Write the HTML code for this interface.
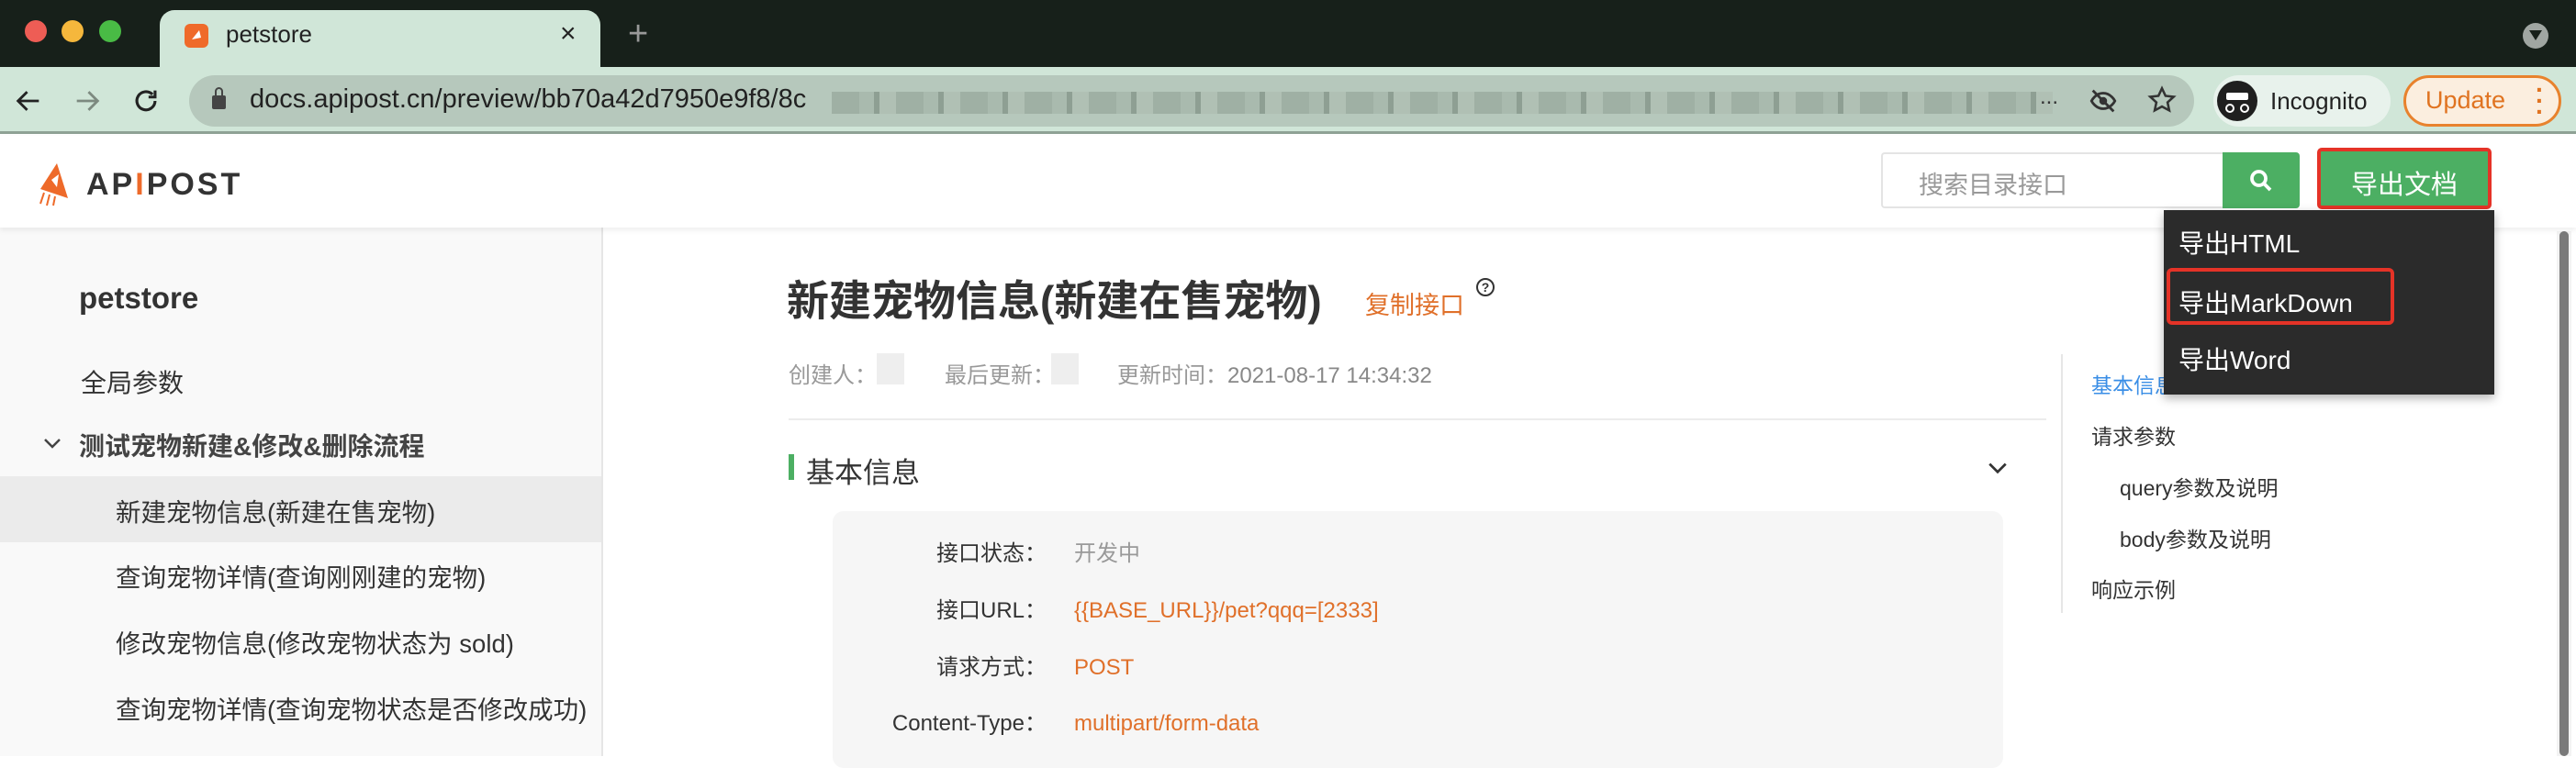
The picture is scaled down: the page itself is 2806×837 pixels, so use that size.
<!DOCTYPE html>
<html><head><meta charset="utf-8"><style>
*{margin:0;padding:0;box-sizing:border-box}
body{width:2806px;height:824px;overflow:hidden;position:relative;background:#fff;font-family:"Liberation Sans","Noto Sans CJK SC",sans-serif;color:#333}
.a{position:absolute;white-space:nowrap}
.dot{position:absolute;width:24px;height:24px;border-radius:50%;top:22px}
.r{line-height:32px;height:32px}
</style></head><body>
<div class="a" style="left:0;top:0;width:2806px;height:73px;background:#17201a"></div>
<div class="dot" style="left:27px;background:#ee5d55"></div>
<div class="dot" style="left:67px;background:#f5b73c"></div>
<div class="dot" style="left:108px;background:#49bb45"></div>
<div class="a" style="left:174px;top:11px;width:480px;height:64px;background:#d0e6d8;border-radius:16px 16px 0 0"></div>
<div class="a" style="left:201px;top:26px;width:26px;height:26px;background:#ef6a2a;border-radius:6px"></div>
<svg class="a" style="left:204px;top:29px" width="20" height="20" viewBox="0 0 20 20"><path d="M5 14 L13 4 L15 12 Z" fill="#fff"/></svg>
<div class="a" style="left:246px;top:22px;font-size:26px;color:#222">petstore</div>
<div class="a" style="left:610px;top:20px;font-size:30px;color:#222">×</div>
<div class="a" style="left:684px;top:16px;font-size:38px;color:#999">+</div>
<div class="a" style="left:2748px;top:25px;width:28px;height:28px;border-radius:50%;background:#a0a6a2"></div>
<div class="a" style="left:2755px;top:33px;border-left:7px solid transparent;border-right:7px solid transparent;border-top:11px solid #17201a"></div>
<div class="a" style="left:0;top:73px;width:2806px;height:73px;background:#d0e6d8;border-bottom:3px solid #8fa295"></div>
<svg class="a" style="left:14px;top:93px" width="34" height="34" viewBox="0 0 24 24"><path d="M20 12H5M11 5l-7 7 7 7" stroke="#222" stroke-width="2" fill="none"/></svg>
<svg class="a" style="left:78px;top:93px" width="34" height="34" viewBox="0 0 24 24"><path d="M4 12h15M13 5l7 7-7 7" stroke="#7d8a80" stroke-width="2" fill="none"/></svg>
<svg class="a" style="left:142px;top:93px" width="34" height="34" viewBox="0 0 24 24"><path d="M19 12a7 7 0 1 1-2-5M19 4v5h-5" stroke="#222" stroke-width="2.2" fill="none"/></svg>
<div class="a" style="left:206px;top:82px;width:2184px;height:56px;border-radius:28px;background:#b6c8bc"></div>
<div class="a" style="left:231px;top:104px;width:15px;height:15px;background:#444;border-radius:2px"></div>
<div class="a" style="left:234px;top:95px;width:9px;height:12px;border:2px solid #444;border-radius:5px 5px 0 0"></div>
<div class="a" style="left:272px;top:92px;font-size:29px;color:#222">docs.apipost.cn/preview/bb70a42d7950e9f8/8c</div>
<div class="a" style="left:906px;top:100px;width:1330px;height:24px;background:repeating-linear-gradient(90deg,#9fb0a4 0 30px,#a9baae 30px 46px,#8e9f93 46px 52px,#b0c0b4 52px 70px)"></div>
<div class="a" style="left:2222px;top:92px;font-size:24px;color:#333">...</div>
<svg class="a" style="left:2274px;top:93px" width="34" height="34" viewBox="0 0 24 24"><path d="M3 12s3-6 9-6 9 6 9 6-3 6-9 6-9-6-9-6zM4 4l16 16" stroke="#333" stroke-width="2" fill="none"/><circle cx="12" cy="12" r="3" fill="#333"/></svg>
<svg class="a" style="left:2338px;top:92px" width="34" height="34" viewBox="0 0 24 24"><path d="M12 3l2.7 5.8 6.3.7-4.7 4.3 1.3 6.2L12 17l-5.6 3 1.3-6.2L3 9.5l6.3-.7z" stroke="#333" stroke-width="1.8" fill="none"/></svg>
<div class="a" style="left:2411px;top:82px;width:193px;height:56px;border-radius:28px;background:#e8f2ec"></div>
<div class="a" style="left:2415px;top:88px;width:44px;height:44px;border-radius:50%;background:#1f1f1f"></div>
<div class="a" style="left:2425px;top:101px;width:24px;height:8px;background:#fff;border-radius:2px"></div>
<div class="a" style="left:2424px;top:113px;width:10px;height:10px;border:2px solid #fff;border-radius:50%"></div>
<div class="a" style="left:2440px;top:113px;width:10px;height:10px;border:2px solid #fff;border-radius:50%"></div>
<div class="a" style="left:2473px;top:95px;font-size:26px;color:#222">Incognito</div>
<div class="a" style="left:2618px;top:82px;width:172px;height:56px;border-radius:28px;background:#fbeedf;border:3px solid #e8822d"></div>
<div class="a" style="left:2642px;top:94px;font-size:27px;color:#e07320">Update</div>
<div class="a" style="left:2762px;top:92px;font-size:28px;color:#e07320;font-weight:bold;line-height:12px;width:6px">·<br>·<br>·</div>
<div class="a" style="left:0;top:148px;width:2806px;height:100px;background:#fff;box-shadow:0 3px 6px rgba(0,0,0,.07);z-index:1"></div>
<svg class="a" style="left:38px;top:176px;z-index:2" width="42" height="50" viewBox="0 0 42 50"><path d="M24 2 L36 40 L6 30 Z" fill="#ee6a2a"/><path d="M10 34 L6 46 M16 36 L13 48 M22 38 L20 48" stroke="#ee6a2a" stroke-width="2"/><path d="M18 20 L26 14 L24 28 Z" fill="#fff"/></svg>
<div class="a" style="left:94px;top:182px;font-size:34px;font-weight:bold;color:#333;letter-spacing:3px;z-index:2">AP<span style="color:#ee6a2a">I</span>POST</div>
<div class="a" style="left:2049px;top:166px;width:374px;height:61px;border:2px solid #e4e4e4;border-right:none;border-radius:4px 0 0 4px;z-index:2"></div>
<div class="a" style="left:2090px;top:180px;font-size:27px;color:#999;z-index:2">搜索目录接口</div>
<div class="a" style="left:2421px;top:166px;width:84px;height:61px;background:#4caf63;border-radius:0 4px 4px 0;z-index:2"></div>
<svg class="a" style="left:2448px;top:182px;z-index:3" width="30" height="30" viewBox="0 0 24 24"><circle cx="10" cy="10" r="6" stroke="#fff" stroke-width="3" fill="none"/><path d="M15 15l5 5" stroke="#fff" stroke-width="3"/></svg>
<div class="a" style="left:2524px;top:161px;width:190px;height:67px;border:4px solid #e53327;border-radius:5px;background:#4caf63;z-index:2"></div>
<div class="a" style="left:2561px;top:178px;font-size:29px;color:#fff;z-index:3">导出文档</div>
<div class="a" style="left:0;top:248px;width:657px;height:576px;background:#f9f9f9;border-right:2px solid #e6e6e6"></div>
<div class="a" style="left:86px;top:306px;font-size:33px;font-weight:bold;color:#333">petstore</div>
<div class="a" style="left:88px;top:396px;font-size:28px;color:#333">全局参数</div>
<svg class="a" style="left:46px;top:472px" width="22" height="22" viewBox="0 0 22 22"><path d="M3 7l8 8 8-8" stroke="#444" stroke-width="2.5" fill="none"/></svg>
<div class="a" style="left:86px;top:465px;font-size:28px;font-weight:bold;color:#444">测试宠物新建&amp;修改&amp;删除流程</div>
<div class="a" style="left:0;top:519px;width:655px;height:72px;background:#ebebeb"></div>
<div class="a" style="left:126px;top:536px;font-size:27.5px;color:#333">新建宠物信息(新建在售宠物)</div>
<div class="a" style="left:126px;top:607px;font-size:27.5px;color:#333">查询宠物详情(查询刚刚建的宠物)</div>
<div class="a" style="left:126px;top:679px;font-size:27.5px;color:#333">修改宠物信息(修改宠物状态为 sold)</div>
<div class="a" style="left:126px;top:751px;font-size:27.5px;color:#333">查询宠物详情(查询宠物状态是否修改成功)</div>
<div class="a" style="left:857px;top:292px;font-size:46px;font-weight:bold;color:#333">新建宠物信息(新建在售宠物)</div>
<div class="a" style="left:1487px;top:311px;font-size:27px;color:#e0702a">复制接口</div>
<div class="a" style="left:1608px;top:303px;width:20px;height:20px;border:2px solid #333;border-radius:50%;font-size:14px;text-align:center;line-height:17px;font-weight:bold">?</div>
<div class="a" style="left:859px;top:389px;font-size:24px;color:#999">创建人：</div>
<div class="a" style="left:955px;top:385px;width:30px;height:34px;background:#eee"></div>
<div class="a" style="left:1029px;top:389px;font-size:24px;color:#999">最后更新：</div>
<div class="a" style="left:1145px;top:385px;width:30px;height:34px;background:#eee"></div>
<div class="a" style="left:1217px;top:389px;font-size:24px;color:#999">更新时间：<span style="color:#888">2021-08-17 14:34:32</span></div>
<div class="a" style="left:859px;top:456px;width:1370px;height:2px;background:#ececec"></div>
<div class="a" style="left:859px;top:495px;width:6px;height:28px;background:#4caf63"></div>
<div class="a" style="left:878px;top:490px;font-size:31px;color:#333">基本信息</div>
<svg class="a" style="left:2164px;top:498px" width="24" height="24" viewBox="0 0 22 22"><path d="M3 7l8 8 8-8" stroke="#333" stroke-width="2.5" fill="none"/></svg>
<div class="a" style="left:907px;top:557px;width:1275px;height:280px;background:#f6f6f6;border-radius:12px"></div>
<div class="a r" style="left:907px;top:588px;width:233px;text-align:right;font-size:24px;color:#333">接口状态：</div>
<div class="a r" style="left:1170px;top:588px;font-size:24px;color:#999">开发中</div>
<div class="a r" style="left:907px;top:650px;width:233px;text-align:right;font-size:24px;color:#333">接口URL：</div>
<div class="a r" style="left:1170px;top:650px;font-size:24px;color:#e0702a">{{BASE_URL}}/pet?qqq=[2333]</div>
<div class="a r" style="left:907px;top:712px;width:233px;text-align:right;font-size:24px;color:#333">请求方式：</div>
<div class="a r" style="left:1170px;top:712px;font-size:24px;color:#e0702a">POST</div>
<div class="a r" style="left:907px;top:773px;width:233px;text-align:right;font-size:24px;color:#333">Content-Type：</div>
<div class="a r" style="left:1170px;top:773px;font-size:24px;color:#e0702a">multipart/form-data</div>
<div class="a" style="left:2245px;top:386px;width:2px;height:282px;background:#e6e6e6"></div>
<div class="a" style="left:2278px;top:401px;font-size:23px;color:#3a8ee6">基本信息</div>
<div class="a" style="left:2278px;top:457px;font-size:23px;color:#333">请求参数</div>
<div class="a" style="left:2309px;top:513px;font-size:23px;color:#333">query参数及说明</div>
<div class="a" style="left:2309px;top:569px;font-size:23px;color:#333">body参数及说明</div>
<div class="a" style="left:2278px;top:624px;font-size:23px;color:#333">响应示例</div>
<div class="a" style="left:2785px;top:252px;width:16px;height:572px;background:#f3f3f3"></div>
<div class="a" style="left:2788px;top:252px;width:10px;height:572px;background:#7a7a7a;border-radius:5px"></div>
<div class="a" style="left:2357px;top:229px;width:360px;height:201px;background:#2b2b2b;box-shadow:0 4px 10px rgba(0,0,0,.3);z-index:4"></div>
<div class="a" style="left:2373px;top:244px;font-size:28px;color:#fff;z-index:5">导出HTML</div>
<div class="a" style="left:2360px;top:292px;width:248px;height:62px;border:4px solid #e53327;border-radius:6px;z-index:5"></div>
<div class="a" style="left:2373px;top:309px;font-size:28px;color:#fff;z-index:5">导出MarkDown</div>
<div class="a" style="left:2373px;top:371px;font-size:28px;color:#fff;z-index:5">导出Word</div>
</body></html>
